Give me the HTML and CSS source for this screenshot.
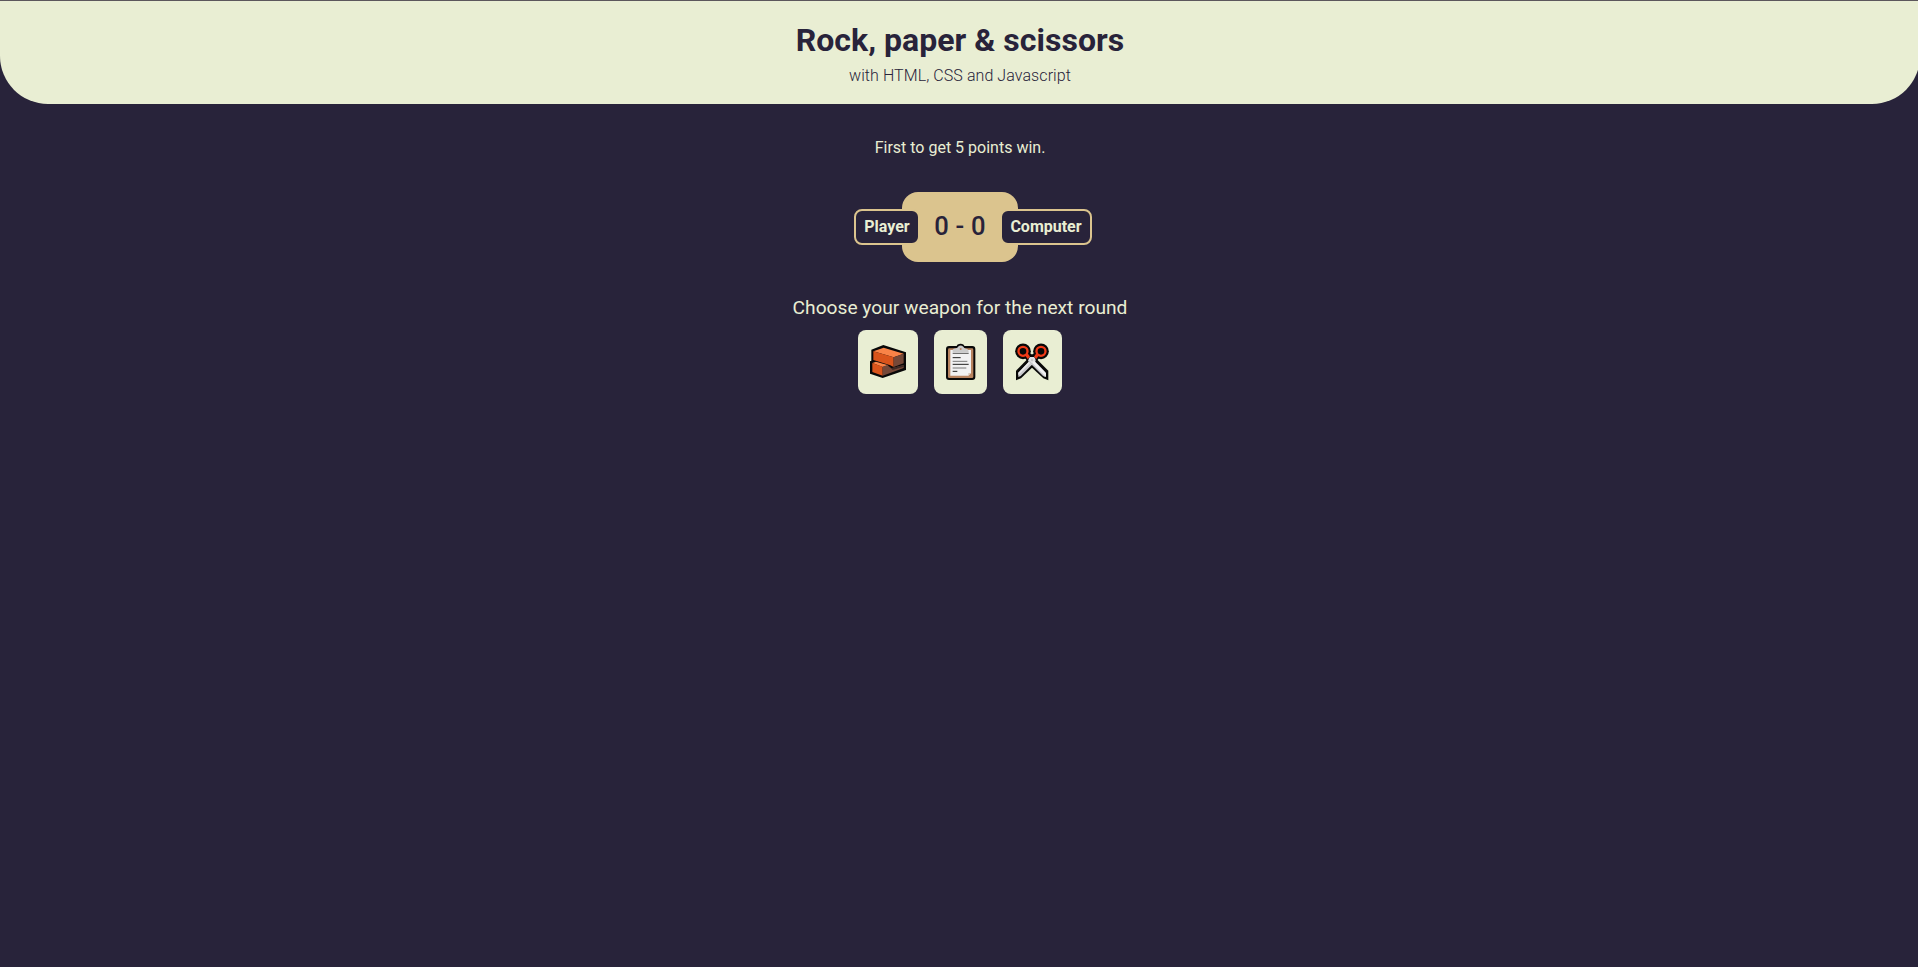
FILE: index.html
```
<!DOCTYPE html>
<html lang="en">
<head>
<meta charset="utf-8">
<title>Rock, paper &amp; scissors</title>
<link rel="stylesheet" href="styles.css">
</head>
<body>
<div class="page">
  <header class="header">
    <h1 class="title">Rock, paper &amp; scissors</h1>
    <p class="subtitle">with HTML, CSS and Javascript</p>
  </header>
  <main class="game">
    <p class="rules">First to get 5 points win.</p>
    <div class="scoreboard">
      <span class="label label-player">Player</span>
      <span class="score">0 - 0</span>
      <span class="label label-computer">Computer</span>
    </div>
    <h2 class="prompt">Choose your weapon for the next round</h2>
    <div class="weapons">
      <button class="weapon rock" aria-label="Rock">
        <svg viewBox="24 24 180 192">
          <path d="M100 69 L168 91 V144 L98 168 L60 155 V118 L64 116 V83Z" fill="#080808"/>
          <path d="M70 88 L101 77 L161 95 L131 106Z" fill="#f98347"/>
          <path d="M70 88 L131 106 V135 L121 130 L70 114Z" fill="#d9541b"/>
          <path d="M131 106 L161 95 V124 L131 135Z" fill="#754838"/>
          <path d="M67 123 L78 119 L115 130 L98 135Z" fill="#f98347"/>
          <path d="M67 123 L98 134 V161 L67 150Z" fill="#d9541b"/>
          <path d="M98 134 L112 129 L124 139 L161 129 V138 L98 161Z" fill="#754838"/>
          <path d="M112 129 L124 139 L161 129 V134 L128 144Z" fill="#3c2925"/>
        </svg>
      </button>
      <button class="weapon paper" aria-label="Paper">
        <svg viewBox="27 24 159 192">
          <rect x="63" y="72" width="88" height="102" rx="9" fill="#080808"/>
          <path d="M92 78 L97 68 Q107 62 116 68 L122 78Z" fill="#080808"/>
          <rect x="69" y="79" width="76" height="89" rx="4" fill="#b88460"/>
          <path d="M76 84 H138 V153 L130 161 H76Z" fill="#f1f1f2"/>
          <path d="M138 153 H130 V161Z" fill="#d8c8bc"/>
          <path d="M83 91 V83 Q84 80 93 79 Q98 78 99 74 Q107 67 115 74 Q117 79 123 80 Q131 80 131 91Z" fill="#cacaca"/>
          <circle cx="107" cy="81" r="3" fill="#b88460"/>
          <path d="M83 94 H131" stroke="#555" stroke-width="3"/>
          <path d="M83 107 H107 M83 127 H131 M83 148 H97" stroke="#222" stroke-width="3"/>
          <path d="M83 118 H127 M83 138 H124" stroke="#777" stroke-width="3"/>
        </svg>
      </button>
      <button class="weapon scissors" aria-label="Scissors">
        <svg viewBox="24 24 177 192">
          <g fill="#080808">
            <circle cx="84" cy="88" r="23.5"/><circle cx="138" cy="88" r="23.5"/>
            <path d="M90 108 L104 94 L112 98 L160 146 V175 L145 169 L111 137Z"/>
            <path d="M132 108 L118 94 L110 98 L63 146 V175 L78 169 L111 137Z"/>
          </g>
          <path d="M113 107 L123 116 L77 162 L70 165 V152Z" fill="#c9c9cc"/>
          <path d="M113 107 L118 111 L70 160 V152Z" fill="#e6e6e8"/>
          <path d="M109 107 L99 116 L145 162 L153 165 V152Z" fill="#f0f0f2"/>
          <path d="M102 113 L99 116 L145 162 L153 165Z" fill="#c5c5c9"/>
          <path d="M91 101 L98 94 L105 104 L98 111Z M131 101 L124 94 L117 104 L124 111Z" fill="#f03a17"/>
          <circle cx="84" cy="88" r="13.5" fill="#080808" stroke="#f03a17" stroke-width="7"/>
          <circle cx="138" cy="88" r="13.5" fill="#080808" stroke="#f03a17" stroke-width="7"/>
          <path d="M100 112 L105 105 H117 L122 112 L111 124Z" fill="#dedee1"/>
          <circle cx="111" cy="114" r="2" fill="#999"/>
        </svg>
      </button>
    </div>
  </main>
</div>
</body>
</html>
```
FILE: styles.css
```
* { box-sizing: border-box; margin: 0; padding: 0; }
html, body { height: 100%; overflow: hidden; }
body {
  background: #28233a;
  color: #e9eed3;
  font-family: Roboto, sans-serif;
  font-size: 16px;
}
.page { width: 1920px; border-top: 1px solid #5c575c; }
.header {
  height: 103px;
  padding-top: 20px;
  background: #e9eed3;
  color: #28233a;
  border-radius: 0 0 48px 48px;
  text-align: center;
}
.title { font-size: 32px; font-weight: 700; line-height: 38px; letter-spacing: 0.03px; }
.subtitle { margin-top: 7px; font-weight: 300; line-height: 19px; letter-spacing: 0.08px; }
.game { display: flex; flex-direction: column; align-items: center; padding-top: 34px; }
.rules { line-height: 19px; }
.scoreboard {
  display: grid;
  grid-template-columns: 1fr 116px 1fr;
  align-items: center;
  width: 400px;
  margin-top: 35px;
}
.score {
  grid-area: 1 / 2;
  height: 70px;
  border-radius: 16px;
  background: #dbc48e;
  color: #28233a;
  font-size: 25.6px;
  font-weight: 500;
  letter-spacing: 0.2px;
  line-height: 68px;
  text-align: center;
}
.label {
  grid-row: 1;
  height: 36px;
  z-index: 1;
  border: 2px solid #dbc48e;
  border-radius: 8px;
  background: #28233a;
  font-weight: 700;
  line-height: 32px;
  text-align: center;
}
.label-player { grid-column: 1; justify-self: end; width: 66px; margin-right: -18px; }
.label-computer { grid-column: 3; justify-self: start; width: 92px; margin-left: -18px; }
.prompt { margin-top: 34px; font-size: 19.2px; font-weight: 400; line-height: 23px; }
.weapons { display: flex; gap: 16px; margin-top: 11px; }
.weapon { height: 64px; border: 0; border-radius: 8px; background: #e9eed3; }
.weapon svg { display: block; width: 100%; height: 100%; }
.rock { width: 60px; }
.paper { width: 53px; }
.scissors { width: 59px; }
```
